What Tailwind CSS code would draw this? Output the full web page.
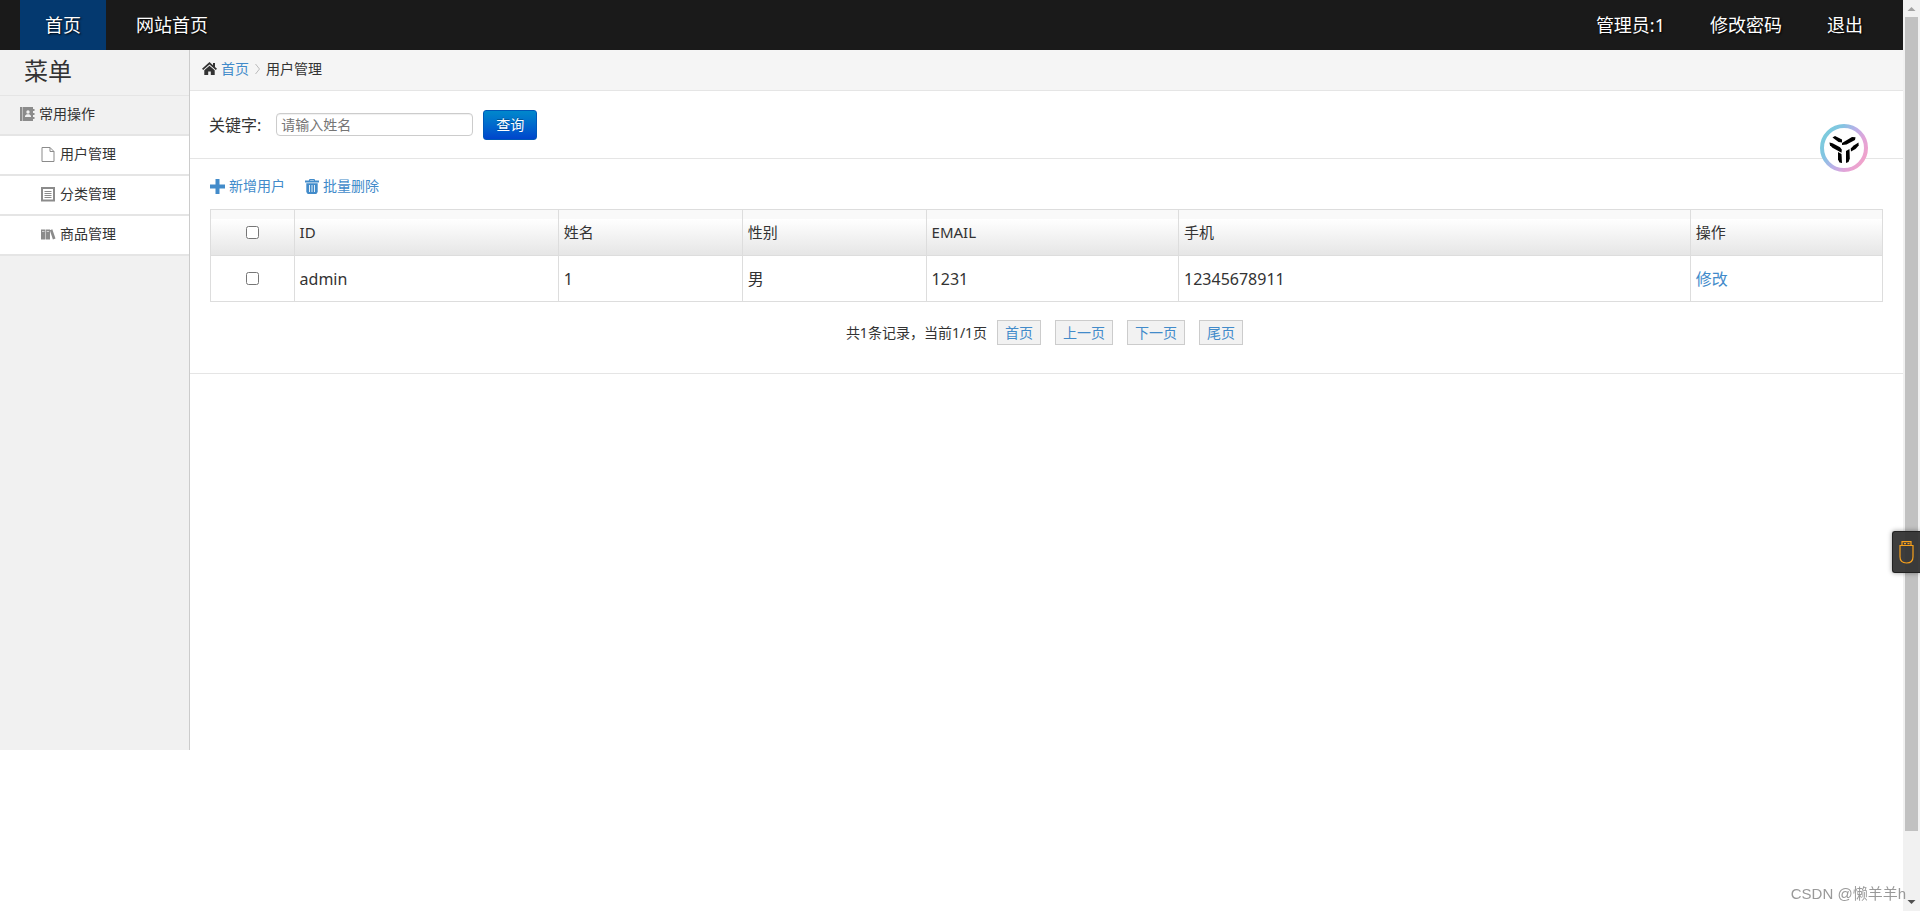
<!DOCTYPE html>
<html lang="zh-CN">
<head>
<meta charset="utf-8">
<title>用户管理</title>
<script src="https://cdn.jsdelivr.net/npm/@tailwindcss/browser@4"></script>
</head>
<body class="flex h-screen overflow-hidden bg-white font-['Noto_Sans','Noto_Sans_CJK_SC',sans-serif] text-sm text-[#333]">
<div class="flex min-w-0 flex-1 flex-col">
  <header class="flex h-[50px] shrink-0 items-stretch justify-between bg-[#1a1a1a] pr-10 pl-5 text-lg text-white text-shadow-[1px_1px_2px_#000]">
    <nav class="flex items-stretch">
      <a href="#" class="flex items-center bg-[#04396f] px-[25px]">首页</a>
      <a href="#" class="flex items-center px-[30px]">网站首页</a>
    </nav>
    <nav class="flex items-center gap-[45px]">
      <a href="#">管理员:1</a>
      <a href="#">修改密码</a>
      <a href="#">退出</a>
    </nav>
  </header>

  <div class="flex min-h-0 flex-1 items-start">
    <aside class="h-[700px] w-[190px] shrink-0 border-r border-[#ccc] bg-[#f1f1f1]">
      <h1 class="flex h-[46px] items-center border-b border-[#e5e5e5] pb-1 pl-6 text-2xl">菜单</h1>
      <h2 class="flex h-10 items-center gap-1 border-b-2 border-[#e5e5e5] pb-0.5 pl-5">
        <svg class="size-[15px]" viewBox="0 0 15 15"><path fill="#8b8b8b" d="M0 0H13v2h1.500v2H13v2h1.500v2H13v2h1.500v2H13v2H0z"/><path stroke="#f1f1f1" stroke-opacity=".5" d="M2.500 0v14"/><circle cx="8" cy="5" r="1.700" fill="#f1f1f1"/><path fill="#f1f1f1" d="M5 10V8.700l1.700-1.500h2.600L11 8.700V10z"/></svg>
        常用操作
      </h2>
      <ul>
        <li class="border-b-2 border-[#e5e5e5] bg-white"><a href="#" class="flex h-[38px] items-center gap-[5px] pb-0.5 pl-[41px]">
          <svg class="h-[15px] w-3.5" viewBox="0 0 14 15" fill="none" stroke="#8b8b8b"><path d="M1 .5h8l4 4v10H1zM9 .5v4h4"/></svg>用户管理</a></li>
        <li class="border-b-2 border-[#e5e5e5] bg-white"><a href="#" class="flex h-[38px] items-center gap-[5px] pb-0.5 pl-[41px]">
          <svg class="h-[15px] w-3.5" viewBox="0 0 14 15" fill="none" stroke="#8b8b8b"><path stroke-width="2" d="M1 1h12v12.500H1z"/><path d="M3.500 4.500h7M3.500 6.500h7M3.500 8.500h7M3.500 10.500h7"/></svg>分类管理</a></li>
        <li class="border-b-2 border-[#e5e5e5] bg-white"><a href="#" class="flex h-[38px] items-center gap-[5px] pb-0.5 pl-[41px]">
          <svg class="h-[15px] w-3.5 overflow-visible" viewBox="0 0 14 15"><path fill="#8b8b8b" d="M0 2.500h4.300V12.500H0zM4.800 2.500H9V12.500H4.800zM8.800 3.200l2.500-.9 3.200 9.200-2.600.9z"/><path stroke="#fff" stroke-opacity=".6" d="M1 4.500h2.500M5.700 4.500h2.400"/></svg>商品管理</a></li>
      </ul>
    </aside>

    <main class="min-w-0 flex-1">
      <nav class="flex h-[41px] items-center border-b border-[#e5e5e5] bg-[#f5f5f5] pb-0.5 pl-3">
        <svg class="mr-1 h-3.5 w-[15px]" viewBox="0 0 15 14" fill="#333"><path d="M7.500 0 0 6.800l1.200 1.300 6.300-5.700 6.300 5.700L15 6.800l-2-1.800V1h-2v2.200z"/><path d="M7.500 3.700 2.300 8.300V13h3.900V9.500h2.600V13h3.900V8.300z"/></svg>
        <a href="#" class="text-[#428bca]">首页</a>
        <svg class="mx-[6px] h-3 w-[5px]" viewBox="0 0 5 12" fill="none" stroke="#bbb"><path d="m.5 1 4 5-4 5"/></svg>
        <span>用户管理</span>
      </nav>

      <form class="flex h-[68px] items-center border-b border-[#e5e5e5] pl-[19px]">
        <label for="kw" class="text-base">关键字:</label>
        <input id="kw" type="text" placeholder="请输入姓名" class="ml-[15px] h-[23px] w-[197px] rounded-[4px] border border-[#ccc] bg-white px-1 text-sm shadow-[inset_0_1px_1px_#00000010] placeholder:text-[#757575]">
        <button type="button" class="ml-[10px] h-[30px] w-[54px] rounded-[3px] border border-[#0058b8] bg-linear-to-b from-[#0088cc] to-[#0044cc] text-sm text-white text-shadow-[0_-1px_0_#00000040]">查询</button>
      </form>

      <section class="border-b border-[#e5e5e5] pr-5 pb-7 pl-5">
        <div class="flex h-[50px] items-center gap-5 pt-1 text-[#428bca]">
          <a href="#" class="flex items-center gap-1">
            <svg class="size-[15px]" viewBox="0 0 15 15" fill="#428bca"><path d="M5.500 0h4v5.500H15v4H9.500V15h-4V9.500H0v-4h5.500z"/></svg>新增用户</a>
          <a href="#" class="flex items-center gap-1">
            <svg class="h-[15px] w-3.5" viewBox="0 0 14 15"><path fill="#428bca" fill-rule="evenodd" d="M4.500 0h5l.7 1.500H14v2H0v-2h3.800zM5.300 1l-.3.500h4L8.700 1z"/><path fill="#428bca" d="M1.300 4.200h11.400V13l-1.400 2H2.700l-1.400-2z"/><path stroke="#fff" stroke-opacity=".85" d="M4.500 6v7M7 6v7M9.500 6v7"/></svg>批量删除</a>
        </div>
        <table class="w-full table-fixed border-collapse text-left [&_td]:border [&_td]:border-[#ddd] [&_td]:px-[5px] [&_th]:border [&_th]:border-[#ddd] [&_th]:px-[5px] [&_th]:font-normal">
          <colgroup><col class="w-[5%]"><col class="w-[15.8%]"><col class="w-[11%]"><col class="w-[11%]"><col class="w-[15.1%]"><col class="w-[30.6%]"><col></colgroup>
          <thead>
            <tr class="h-[46px] bg-[linear-gradient(#f9f9f9_9px,#fff_9px,#e5e5e5)] text-[15px]">
              <th><input type="checkbox" aria-label="全选" class="mx-auto block size-[13px]"></th>
              <th>ID</th><th>姓名</th><th>性别</th><th>EMAIL</th><th>手机</th><th>操作</th>
            </tr>
          </thead>
          <tbody>
            <tr class="h-[46px] text-base">
              <td><input type="checkbox" aria-label="选择 admin" class="mx-auto block size-[13px]"></td>
              <td>admin</td><td>1</td><td>男</td><td>1231</td><td>12345678911</td><td><a href="#" class="text-[#428bca]">修改</a></td>
            </tr>
          </tbody>
        </table>
        <div class="mt-[18px] flex h-[25px] items-center justify-center gap-[14px] pr-1">
          <span class="-mr-1">共1条记录，当前1/1页</span>
          <a href="#" class="flex h-[25px] items-center border border-[#ccc] bg-[#f2f2f2] px-[7px] text-[#428bca]">首页</a>
          <a href="#" class="flex h-[25px] items-center border border-[#ccc] bg-[#f2f2f2] px-[7px] text-[#428bca]">上一页</a>
          <a href="#" class="flex h-[25px] items-center border border-[#ccc] bg-[#f2f2f2] px-[7px] text-[#428bca]">下一页</a>
          <a href="#" class="flex h-[25px] items-center border border-[#ccc] bg-[#f2f2f2] px-[7px] text-[#428bca]">尾页</a>
        </div>
      </section>
    </main>
  </div>
</div>

<div class="flex w-[17px] shrink-0 flex-col items-center bg-[#f1f1f1]" aria-hidden="true">
  <svg class="h-[17px] w-[17px] shrink-0" viewBox="0 0 17 17" fill="#a3a3a3"><path d="m8.500 7 4 4h-8z"/></svg>
  <div class="w-[13px] grow-[814] bg-[#c1c1c1]"></div>
  <div class="grow-[63]"></div>
  <svg class="h-[17px] w-[17px] shrink-0" viewBox="0 0 17 17" fill="#505050"><path d="M4.500 6h8l-4 4z"/></svg>
</div>

<button type="button" aria-label="助手" class="fixed top-[124px] right-[52px] size-12 rounded-full">
  <svg class="size-12" viewBox="0 0 48 48">
    <defs><linearGradient id="ring" x1="0" y1=".2" x2="1" y2=".8"><stop offset=".05" stop-color="#7ccbdd"/><stop offset=".25" stop-color="#82c4e2"/><stop offset=".5" stop-color="#b9b0e8"/><stop offset=".75" stop-color="#e3a4d8"/><stop offset="1" stop-color="#f2a2c8"/></linearGradient></defs>
    <circle cx="24" cy="24" r="22" fill="#fff" stroke="url(#ring)" stroke-width="4"/>
    <g fill="#000"><path d="M12.500 13.500 15 12l7 3.500v3l-3.500-.5z"/><path d="m22 19 10-6 3.500.3-.5 2.700-8.500 4.500-4.500.5z"/><path d="m9.500 18.500 3 .8 7.500 4 1.800 2.200-.3 3.200-9-5-2.500-2.500z"/><path d="m38.500 18.500.2 3-3.200 3.500-4.500 2.500-.3-3 3-3z"/><path d="m18 28 3.500 2 .5 9-2.500-.5-1.500-3z"/><path d="m26 27 3.500-2 .3 9.500-1.300 3.500-2.500 1z"/></g>
  </svg>
</button>

<button type="button" aria-label="U盘" class="fixed top-[531px] right-0 flex h-[42px] w-7 items-center justify-center rounded-l-[3px] border border-r-0 border-[#222] bg-[#333]/95 shadow-[0_0_5px_#00000066]">
  <svg class="h-[23px] w-[15px]" viewBox="0 0 15 23" fill="none" stroke="#f9a11b" stroke-width="1.200"><path d="M3 4.500V.7h9v3.800M1 4.500h13v11.200Q14 22 7.500 22T1 15.700zM5 2.600h2M8.500 2.600h2"/></svg>
</button>

<div class="fixed right-[14px] bottom-[7px] font-['Liberation_Sans','Noto_Sans_CJK_SC',sans-serif] text-[15px] text-[#999]">CSDN @懒羊羊h</div>
</body>
</html>
